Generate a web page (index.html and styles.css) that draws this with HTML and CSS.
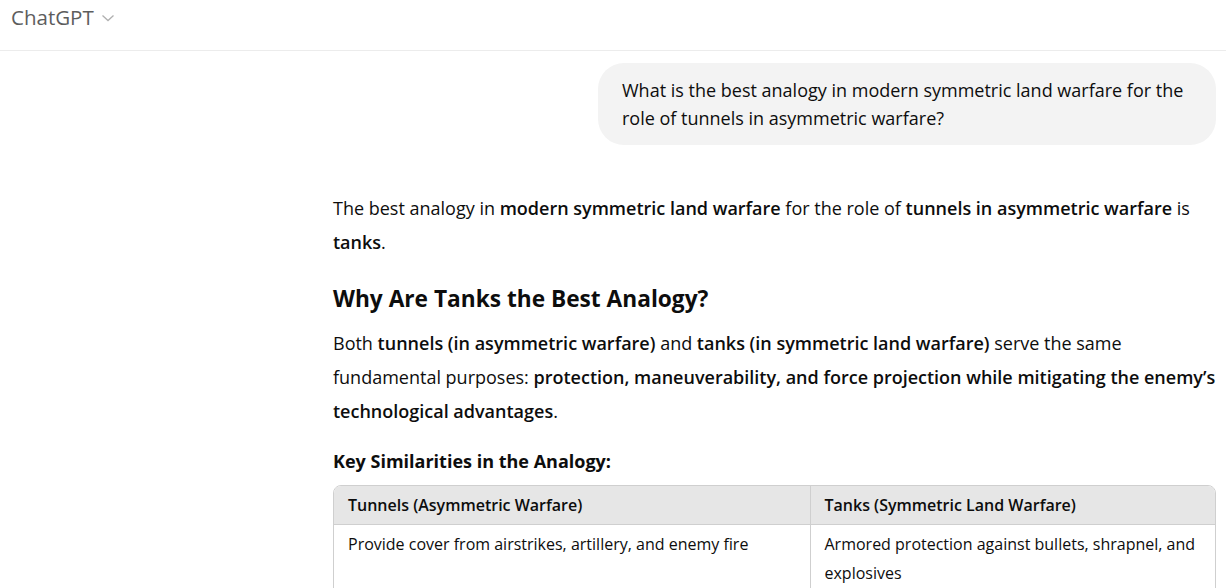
FILE: index.html
```html
<!DOCTYPE html>
<html>
<head>
<meta charset="utf-8">
<link rel="stylesheet" href="styles.css">
</head>
<body>
<header class="topbar">
  <div class="brand">ChatGPT
    <svg class="chev" width="14" height="10" viewBox="0 0 14 10"><path d="M1.5 2.5 L7 7.5 L12.5 2.5" fill="none" stroke="#b0b0b0" stroke-width="1.3"/></svg>
  </div>
</header>
<main class="thread">
  <div class="user-row">
    <div class="bubble">What is the best analogy in modern symmetric land warfare for the role of tunnels in asymmetric warfare?</div>
  </div>
  <div class="answer">
    <p>The best analogy in <strong>modern symmetric land warfare</strong> for the role of <strong>tunnels in asymmetric warfare</strong> is <strong>tanks</strong>.</p>
    <h3>Why Are Tanks the Best Analogy?</h3>
    <p>Both <strong>tunnels (in asymmetric warfare)</strong> and <strong>tanks (in symmetric land warfare)</strong> serve the same fundamental purposes: <strong>protection, maneuverability, and force projection while mitigating the enemy’s technological advantages</strong>.</p>
    <h4>Key Similarities in the Analogy:</h4>
    <div class="table-wrap">
      <table>
        <thead>
          <tr><th class="col-a">Tunnels (Asymmetric Warfare)</th><th>Tanks (Symmetric Land Warfare)</th></tr>
        </thead>
        <tbody>
          <tr><td>Provide cover from airstrikes, artillery, and enemy fire</td><td>Armored protection against bullets, shrapnel, and explosives</td></tr>
        </tbody>
      </table>
    </div>
  </div>
</main>
</body>
</html>
```
FILE: styles.css
```css
* { box-sizing: border-box; }
html, body { margin: 0; padding: 0; background: #fff; }
body {
  font-family: "Open Sans", "Noto Sans", sans-serif;
  color: #0d0d0d;
  overflow: hidden;
  height: 588px;
}
.topbar {
  height: 51px;
  border-bottom: 1px solid #ececec;
  display: flex;
  align-items: center;
  padding-left: 11px;
}
.brand {
  font-size: 20.5px;
  color: #5d5d5d;
  display: flex;
  align-items: center;
  gap: 7px;
  margin-top: -16px;
}
.chev { margin-top: 2px; }
.thread {
  padding: 12px 10px 0 333px;
}
.user-row { display: flex; justify-content: flex-end; }
.bubble {
  background: #f3f3f3;
  border-radius: 26px;
  padding: 13px 24px;
  width: 618px;
  font-size: 18px;
  line-height: 28px;
  color: #0d0d0d;
}
.answer {
  margin-top: 46px;
  font-size: 18px;
  line-height: 34px;
}
.answer p { margin: 0; }
.answer strong { font-weight: 600; }
h3 {
  font-size: 22.7px;
  font-weight: 700;
  margin: 24px 0 11px;
  line-height: 32px;
}
h4 {
  font-size: 18px;
  font-weight: 700;
  margin: 20px 0 11px;
  line-height: 26px;
}
.table-wrap {
  border: 1px solid #cfcfcf;
  border-radius: 8px 8px 0 0;
  overflow: hidden;
}
table { width: 100%; border-collapse: collapse; font-size: 16px; }
th {
  background: #e6e6e6;
  text-align: left;
  font-weight: 600;
  padding: 7px 14px;
  line-height: 24px;
  border-bottom: 1px solid #cfcfcf;
}
.col-a { width: 476px; }
th + th, td + td { border-left: 1px solid #cfcfcf; }
td {
  padding: 5px 14px;
  line-height: 29px;
  vertical-align: top;
}
```
